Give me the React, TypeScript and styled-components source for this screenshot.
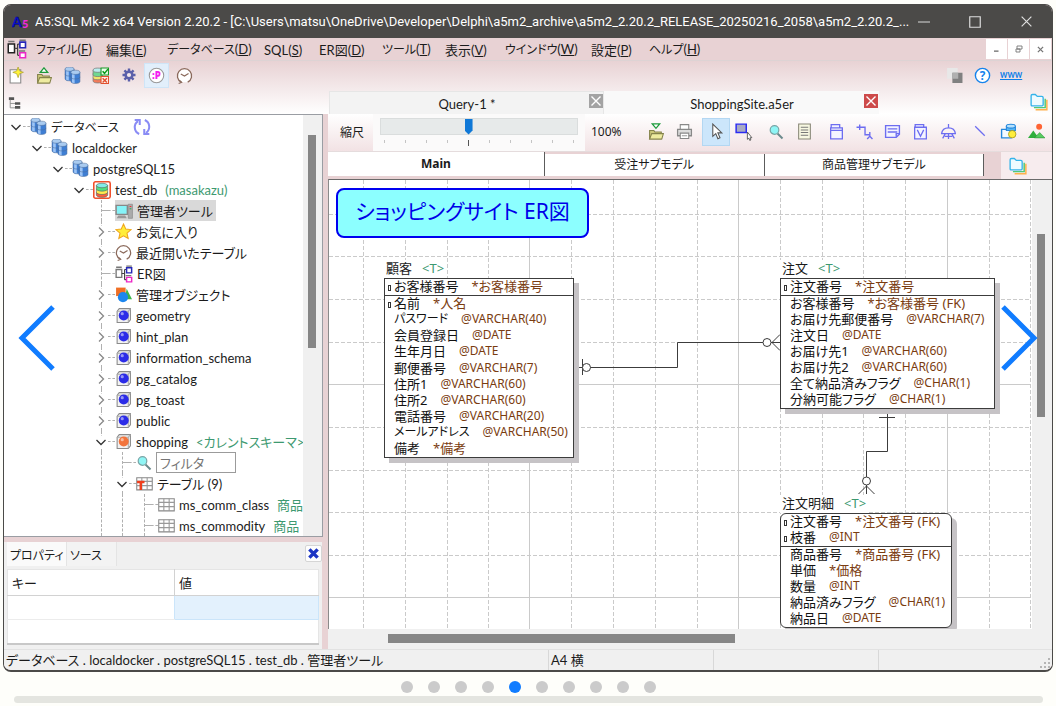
import React from "react";
import styled, { createGlobalStyle, css } from "styled-components";

const ui = `Lato, "Noto Sans CJK JP", sans-serif`;
const diagramFont = `"Noto Sans", "Noto Sans CJK JP", sans-serif`;
const pink = "#e8d2d4";

const Global = createGlobalStyle`
  *, *::before, *::after { box-sizing: border-box; }
  body { margin: 0; background: #fefefa; font-family: ${ui}; font-size: 13px; color: #1b1b1b; font-feature-settings: "palt"; }
  button { font: inherit; color: inherit; padding: 0; border: 0; background: none; }
  svg { display: block; flex: none; }
`;

/* ---------- frame ---------- */
const Page = styled.main`
  position: relative; height: 100vh; min-height: 500px; padding: 4px 3px 3px;
  display: flex; flex-direction: column; overflow: hidden;
`;
const Frame = styled.section`
  flex: 1; min-height: 0; display: flex; flex-direction: column;
  border: 1px solid #4b4a48; border-bottom-width: 2px; border-radius: 8px; overflow: hidden; background: ${pink};
`;
const TitleBar = styled.header`
  height: 33px; flex: none; display: flex; align-items: center; gap: 5px; padding-left: 8px;
  background: #4b4a48; color: #fff;
`;
const TitleText = styled.h1`
  margin: 0; font-family: Roboto, sans-serif; font-size: 13px; font-weight: 400; flex: 1; white-space: nowrap; overflow: hidden; text-overflow: ellipsis;
`;
const Caption = styled.div` display: flex; gap: 23px; padding-right: 12px; margin-left: -5px; `;
const CaptionButton = styled.button` width: 28px; height: 33px; display: grid; place-items: center; `;
const MenuBar = styled.nav`
  height: 22px; flex: none; display: flex; align-items: center; background: ${pink};
`;
const MenuIcon = styled.span` width: 32px; display: grid; place-items: start; padding-left: 3px; `;
const MenuList = styled.div`
  flex: 1; display: grid; white-space: nowrap;
  grid-template-columns: 70px 61px 97px 55px 63px 63px 60px 86px 58px auto;
`;
const MenuItem = styled.button` text-align: left; line-height: 22px; padding-top: 1px; `;
const Kana = styled.span<{ $small: boolean }>` font-size: ${(p) => (p.$small ? 12 : 13)}px; `;
const MdiButton = styled.button`
  width: 21px; height: 20px; margin-right: 1px; background: #fff; display: grid; place-items: center;
`;
const ToolArea = styled.div`
  flex: none; height: 54px; display: flex; flex-direction: column;
  background: linear-gradient(${pink}, #fff); border-top: 1px solid #ddd3d4;
`;
const Toolbar = styled.div` height: 30px; flex: none; display: flex; align-items: center; padding-bottom: 2px; `;
const Tool = styled.button<{ $on?: boolean }>`
  width: 25px; height: 25px; margin-right: 3px; display: grid; place-items: center; flex: none;
  ${(p) => p.$on && css`background: #e2effb; box-shadow: inset 0 0 0 1px #cfe5f7;`}
`;
const StackButton = styled.button` width: 26px; display: grid; place-items: center; padding-bottom: 2px; `;
const Spacer = styled.span` flex: 1; `;
const WebLink = styled.a` color: #0f7fe8; font-size: 7px; font-weight: 900; width: 20px; margin: 0 32px 0 2px; line-height: 9px; `;
const TabsRow = styled.div` flex: 1; display: flex; align-items: stretch; `;
const TreeHead = styled.div` width: 325px; flex: none; display: flex; align-items: center; padding-left: 4px; `;
const DocTab = styled.div<{ $on?: boolean }>`
  width: 275px; display: flex; align-items: flex-start; justify-content: flex-end; padding-top: 2px; gap: 1px;
  background: ${(p) => (p.$on ? "#f9f9f9" : "#f3f3f3")}; border: 1px solid ${(p) => (p.$on ? "#f9f9f9" : "#e6e6e6")};
`;
const DocName = styled.button` flex: 1; padding-left: 16px; line-height: 20px; `;
const Shut = styled.button<{ $red?: boolean }>`
  width: 14px; height: 14px; display: grid; place-items: center; background: ${(p) => (p.$red ? "#cd4a4a" : "#a3a3a3")};
`;

/* ---------- body ---------- */
const Body = styled.div` flex: 1; min-height: 0; display: flex; `;
const Side = styled.aside` width: 319px; margin-right: 5px; flex: none; display: flex; flex-direction: column; `;
const TreeBox = styled.div`
  flex: 1; min-height: 0; display: flex; background: #fff; border: 1px solid #9a9da3; border-left: 0; margin-bottom: 5px;
`;
const Tree = styled.div` flex: 1; min-width: 0; overflow: hidden; padding-top: 1px; `;
const Row = styled.div<{ $indent: number }>`
  position: relative; height: 21px; display: flex; align-items: center; white-space: nowrap; padding-left: ${(p) => p.$indent + 5}px;
`;
const Guide = styled.i<{ $x: number }>`
  position: absolute; left: ${(p) => p.$x}px; top: 0; bottom: 0; border-left: 1px dashed #b0b0b0;
`;
const Twist = styled.button`
  flex: none; width: 14px; height: 12px; display: grid; place-items: center; position: relative; background: #fff;
`;
const Leaf = styled.span` flex: none; width: 14px; padding-left: 8px; &::before { content: ""; display: block; border-top: 1px dashed #b0b0b0; } `;
const Stub = styled.span` flex: none; width: 7px; border-top: 1px dashed #b0b0b0; `;
const Item = styled.span<{ $on?: boolean }>`
  flex: none; height: 21px; display: flex; align-items: center; gap: 4px; padding-right: 3px;
  background: ${(p) => (p.$on ? "#d9d9d9" : "transparent")};
`;
const Note = styled.span` color: #3d9970; margin-left: 4px; `;
const FilterInput = styled.input`
  width: 80px; height: 21px; border: 1px solid #9b9b9b; background: #fff; padding: 0 3px; font: inherit;
  &::placeholder { color: #757575; }
`;
const TreeGutter = styled.div` flex: none; background: #f0f0f0; width: 19px; padding: 20px 0 0 5px; `;
const CanvasGutter = styled(TreeGutter)` width: 20px; padding-top: 54px; `;
const BottomGutter = styled.div` flex: none; background: #f0f0f0; height: 20px; padding: 5px 0 0 60px; `;
const Thumb = styled.div<{ $w: string; $h: string }>` width: ${(p) => p.$w}; height: ${(p) => p.$h}; background: #868686; `;
const Props = styled.section` height: 107px; flex: none; background: #f0f0f0; padding: 0 3px 4px; margin-right: 1px; `;
const PropTabs = styled.div` height: 27px; display: flex; margin-right: -3px; `;
const PropTab = styled.button<{ $on?: boolean }>`
  width: ${(p) => (p.$on ? 60 : 50)}px; height: 24px; text-align: left; padding-left: 3px; white-space: nowrap; font-size: 12px;
  background: ${(p) => (p.$on ? "#fafafa" : "#f3f3f3")}; border-right: 1px solid #e4e4e4; margin-bottom: 3px;
`;
const PropClose = styled.button`
  width: 17px; height: 17px; margin: 3px 0; background: #fdfdfd; border: 1px solid #d5d5d5; border-radius: 2px; display: grid; place-items: center;
`;
const PropTable = styled.table`
  width: 100%; height: 76px; background: #fff; border-collapse: collapse; table-layout: fixed;
  border: 1px solid #e5e5e5; border-bottom: 2px solid #c8c8c8;
  th { text-align: left; font-weight: 400; padding: 0 4px; height: 26px; border-bottom: 1px solid #d2d2d2; }
  th + th { border-left: 1px solid #d2d2d2; }
  td { height: 24px; padding: 0; border-bottom: 1px solid #ececec; }
  td + td { background: #e3f1fd; border: 1px solid #cbe5fa; }
  tr.rest td { background: #fff; border: 0; height: auto; }
  col:first-child { width: 167px; }
`;
const Main = styled.section` flex: 1; min-width: 0; display: flex; flex-direction: column; `;
const ErBar = styled.div`
  height: 38px; flex: none; display: flex; align-items: center; background: linear-gradient(#ffffff, #f2e2e4); border-bottom: 1px solid #e5dcdd;
`;
const ScaleLabel = styled.label` width: 45px; padding: 0 0 2px 12px; font-size: 12px; `;
const ScaleBox = styled.div`
  width: 212px; height: 37px; padding: 4px 7px 0; background: #fbfafa; display: flex; flex-direction: column; gap: 5px;
`;
const Scale = styled.input`
  appearance: none; margin: 0; width: 198px; height: 17px; background: #e7eaea; border: 1px solid #dadddd;
  &::-webkit-slider-thumb {
    appearance: none; width: 8px; height: 16px; background: #0f78d7; clip-path: polygon(0 0, 100% 0, 100% 75%, 50% 100%, 0 75%);
  }
`;
const Ticks = styled.div` display: flex; justify-content: space-between; padding: 0 4px; height: 6px; `;
const Tick = styled.i<{ $on?: boolean }>`
  width: 1px; height: ${(p) => (p.$on ? 6 : 3)}px; background: ${(p) => (p.$on ? "#555" : "#c4c4c4")};
`;
const ScaleValue = styled.output` width: 57px; padding: 0 0 2px 6px; font-family: ${diagramFont}; font-size: 12px; `;
const ErTools = styled.div` flex: 1; display: flex; align-items: center; padding-bottom: 2px; `;
const ErTool = styled.button<{ $on?: boolean; $group?: boolean }>`
  width: 28px; height: 28px; display: grid; place-items: center; margin-left: ${(p) => (p.$group ? 4 : 0)}px;
  ${(p) => p.$on && css`background: #cce6fb; border: 1px solid #b3d7f2;`}
`;
const ModelTabs = styled.div` height: 27px; flex: none; display: flex; background: ${pink}; font-family: ${diagramFont}; `;
const ModelTab = styled.button<{ $on?: boolean }>`
  flex: ${(p) => (p.$on ? 217 : 220)}; height: ${(p) => (p.$on ? 24 : 22)}px; margin-top: ${(p) => (p.$on ? 0 : 2)}px; background: #fff;
  border-right: 1px solid #5c5c5c; font-weight: ${(p) => (p.$on ? 700 : 400)}; font-size: 12px; line-height: 20px;
`;
const TabsEnd = styled.div`
  flex: 68; display: flex; align-items: center; justify-content: center; background: linear-gradient(90deg, ${pink} 17px, #f7ecee 17px);
`;
const CanvasRow = styled.div` flex: 1; min-height: 0; display: flex; border-top: 1px solid #6a6a6a; border-left: 1px solid #8a8a8a; `;
const Canvas = styled.div` position: relative; flex: 1; overflow: hidden; background: #fff; font-family: ${diagramFont}; `;
const Wires = styled.svg` position: absolute; inset: 0; `;
const Status = styled.footer`
  height: 21px; flex: none; background: #f0f0f0; border-top: 1px solid #e2e2e2; display: flex; line-height: 21px; white-space: nowrap;
`;
const Cell = styled.span<{ $w?: number }>`
  ${(p) => (p.$w ? `width: ${p.$w}px;` : "flex: 1;")} padding-left: 2px; border-right: 1px solid #d8d8d8;
  &:last-of-type { border: 0; }
`;
const Grip = styled.svg` align-self: flex-end; `;

/* ---------- diagram ---------- */
const Banner = styled.div`
  position: absolute; left: 7px; top: 8px; width: 253px; height: 50px; padding-bottom: 4px; display: grid; place-items: center;
  border: 2px solid #0000f0; border-radius: 8px; background: #8cffff; color: #0000e8; font-size: 21px; line-height: 42px; white-space: nowrap;
`;
const Node = styled.article<{ $x: number; $y: number; $w: number }>`
  position: absolute; left: ${(p) => p.$x}px; top: ${(p) => p.$y}px; width: ${(p) => p.$w}px; white-space: nowrap;
`;
const NodeTitle = styled.h2`
  margin: 0; display: flex; width: fit-content; gap: 10px; padding: 0 2px; height: 18px; line-height: 16px; background: #fff; font-size: 13px; font-weight: 400;
`;
const Tag = styled.span` color: #3d9970; `;
const NodeBox = styled.div<{ $h: number; $round?: boolean }>`
  height: ${(p) => p.$h}px; display: flex; flex-direction: column; background: #fff; border: 1px solid #3c3c3c;
  border-radius: ${(p) => (p.$round ? 6 : 0)}px; box-shadow: 5px 5px 0 #c6c3c6;
`;
const Field = styled.div<{ $last?: boolean }>`
  flex: 1; min-height: 0; padding-bottom: 2px; display: flex; align-items: center; font-size: 13px; line-height: 16px; color: #111;
  ${(p) => p.$last && css`border-bottom: 1px solid #3c3c3c;`}
`;
const Mark = styled.i<{ $on: boolean }>`
  width: 3px; height: 6px; margin: 3px 3px 0; border: 1px solid ${(p) => (p.$on ? "#333" : "transparent")};
`;
const Kind = styled.span<{ $type: boolean }>` color: #7a3c10; margin-left: 13px; font-size: ${(p) => (p.$type ? 12 : 13)}px; `;

/* ---------- carousel ---------- */
const Arrow = styled.button<{ $right?: boolean }>`
  position: absolute; top: 304px; ${(p) => (p.$right ? "right: 16px;" : "left: 16px;")}
`;
const Dots = styled.div` flex: none; height: 24px; display: flex; justify-content: center; align-items: center; gap: 15px; padding-top: 6px; `;
const Dot = styled.button<{ $on: boolean }>`
  width: 12px; height: 12px; border-radius: 50%; background: ${(p) => (p.$on ? "#107cff" : "#cbcbcb")};
`;
const Bar = styled.div` flex: none; height: 7px; margin: 0 10px 0 11px; border-radius: 4px; background: #e4e5e0; `;

/* ---------- icons ---------- */
const Svg = ({ s = 17, children }: { s?: number; children: React.ReactNode }) => (
  <svg width={s} height={s} viewBox="0 0 16 16" fill="none" aria-hidden="true">{children}</svg>
);
const Cyl = ({ x, y, w, h }: { x: number; y: number; w: number; h: number }) => (
  <g stroke="#4a6a98" strokeWidth=".5">
    <path d={`M${x} ${y + 2}v${h - 4}a${w / 2} 2 0 0 0 ${w} 0v-${h - 4}z`} fill="#3f7fd4" />
    <path d={`M${x + 1} ${y + 3}v${h - 4}l2.500 .8v-${h - 4}z`} fill="#9cc4f6" stroke="none" />
    <ellipse cx={x + w / 2} cy={y + 2} rx={w / 2} ry="2" fill="#a9cbf0" />
    <path d={`M${x} ${y + h / 2}a${w / 2} 2 0 0 0 ${w} 0`} />
  </g>
);
const Db = () => <Svg><Cyl x={1} y={0} w={8.5} h={13} /><Cyl x={6.5} y={3} w={8.5} h={12.5} /></Svg>;
const ColorDb = ({ boxed }: { boxed?: boolean }) => (
  <Svg s={18}>
    {boxed && <rect x=".7" y=".7" width="14.6" height="14.6" rx="1.5" stroke="#f0502c" strokeWidth="1.4" fill="#fff" />}
    <g stroke="#5d6b62" strokeWidth=".6">
      <path d="M3 10v2.5a5 2 0 0 0 10 0V10z" fill="#ff5b3e" />
      <path d="M3 7v3a5 2 0 0 0 10 0V7z" fill="#ffe94e" />
      <path d="M3 4v3a5 2 0 0 0 10 0V4z" fill="#52df80" />
      <ellipse cx="8" cy="4" rx="5" ry="2" fill="#82ece8" />
    </g>
  </Svg>
);
const DbCheck = () => (
  <Svg>
    <g stroke="#777" strokeWidth=".7">
      <path d="M1 10v3a4.5 2 0 0 0 9 0v-3z" fill="#f47b5a" /><path d="M1 6v4a4.5 2 0 0 0 9 0V6z" fill="#f2e66a" />
      <path d="M1 3v4a4.5 2 0 0 0 9 0V3z" fill="#6fd991" /><ellipse cx="5.5" cy="3" rx="4.5" ry="2" fill="#b8eeee" />
    </g>
    <path d="M8.500 1h7v6.500h-7z" fill="#eaffea" stroke="#169a26" /><path d="M10 4l1.800 2L15 2" stroke="#0b9a1c" strokeWidth="1.500" />
    <path d="M8.500 9h7v6.500h-7z" fill="#fff0ea" stroke="#e2502e" /><path d="M10 10.500l4 4m0-4l-4 4" stroke="#e2502e" strokeWidth="1.300" />
  </Svg>
);
const NewFile = () => (
  <Svg><path d="M2 2.500h10v12.500H2z" fill="#fff" stroke="#888" /><path d="M9.500 0l1.300 3.700L14.500 5l-3.700 1.300L9.500 10 8.200 6.300 4.500 5l3.700-1.300z" fill="#fff23a" stroke="#a69a20" strokeWidth=".6" /></Svg>
);
const Folder = ({ down }: { down?: boolean }) => (
  <Svg>
    <path d={down ? "M4 .8h7L7.500 5z" : "M4 5h7L7.500 .8z"} fill="#fff" stroke="#1e9b3c" strokeWidth="1.200" />
    <path d="M1.500 15V7h4l1 1.500h6V15z" fill="#cbc77a" stroke="#85834c" /><path d="M1.500 15l2-5h11L13 15z" fill="#eeeba0" stroke="#85834c" />
  </Svg>
);
const Gear = () => (
  <Svg s={16}>
    <g stroke="#5b60aa" strokeWidth="2.400"><path d="M8 1.500v13M1.500 8h13M3.400 3.400l9.200 9.200M12.600 3.400l-9.200 9.200" /></g>
    <circle cx="8" cy="8" r="4.600" fill="#5b60aa" /><circle cx="8" cy="8" r="2.100" fill="#f3e8ea" />
  </Svg>
);
const Face = () => (
  <Svg><circle cx="8" cy="8" r="6.800" fill="#fff" stroke="#999" /><text x="8" y="11.300" textAnchor="middle" fontSize="9" fontWeight="900" fill="#f41ef0" fontFamily="Noto Sans">:P</text></Svg>
);
const Clock = () => (
  <Svg><path d="M5 14.300A6.700 6.700 0 1 1 11 14.300" fill="#fff" stroke="#8b6a5c" strokeWidth="1.200" /><path d="M3 12.500l2.300 2-2.800 1M4.500 6.500l3.500 2 3.800-2.300" stroke="#8b6a5c" strokeWidth="1.100" /></Svg>
);
const TreeIcon = () => (
  <Svg s={14}><path d="M1 1.500h6v3H1zM8 7h6v3H8zM8 11.500h6v3H8z" fill="#555" /><path d="M2.500 4v9.500H8M2.500 8.500H8" stroke="#888" /></Svg>
);
const ErIcon = ({ s = 20, frame = "#222" }: { s?: number; frame?: string }) => (
  <Svg s={s}>
    <path d="M1 2h5M10 1h5M9.500 9.500h5" stroke="#777" strokeWidth="1.200" /><path d="M1 4h5v7H1z" fill="#fff" stroke={frame} strokeWidth="1.200" />
    <path d="M6 7.500h2.500M8.500 4v9M8.500 4H10M8.500 13H10" stroke="#444" />
    <path d="M10.300 2.500h4.500v4.500h-4.500z" fill="#fff" stroke="#2527b8" strokeWidth="1.300" /><path d="M10.300 11h4.500v4h-4.500z" fill="#fff" stroke="#ec28c6" strokeWidth="1.300" />
  </Svg>
);
const Pc = () => (
  <Svg s={18}><path d="M1 3h10v8H1z" fill="#86f3f8" stroke="#888" strokeWidth="1.300" /><path d="M3 12h6l1.500 2.500h-9z" fill="#999" /><path d="M11.800 2h3.700v12.500h-3.700z" fill="#aaa" stroke="#888" strokeWidth=".6" /><path d="M13 4h1.500" stroke="#e33" /><path d="M13 6h1.500" stroke="#2a5" /></Svg>
);
const Star = () => <Svg><path d="M8 1l2.100 4.700 5 .5-3.800 3.400 1.100 5L8 12.100 3.600 14.600l1.100-5L.9 6.200l5-.5z" fill="#ffee3a" stroke="#efa51e" /></Svg>;
const Shapes = () => <Svg><path d="M1 1.500h9v8H1z" fill="#f06f24" /><path d="M11 2.500l5 10h-7z" fill="#3cb54a" /><circle cx="7.500" cy="10.500" r="4.800" fill="#1c86ee" /></Svg>;
const Schema = ({ c }: { c: string }) => (
  <Svg s={17}><path d="M2 4l2-2.500h10.500V12l-2 2.500H2z" fill="#f2f2f2" stroke="#8a8a8a" /><path d="M2 4h10.500v10.500M12.500 4l2-2.500" stroke="#aaa" /><circle cx="8.200" cy="8" r="4.700" fill={c} /><circle cx="6.800" cy="6.300" r="1.500" fill="#fff" opacity=".5" /></Svg>
);
const Lens = ({ s = 16 }: { s?: number }) => <Svg s={s}><path d="M9.500 9.500l5 5" stroke="#6b8a8c" strokeWidth="2" /><circle cx="6.500" cy="6" r="4.300" fill="#8ff5f5" stroke="#78a5a6" strokeWidth="1.200" /></Svg>;
const Grid = ({ t }: { t?: boolean }) => (
  <Svg s={17}><path d="M.7 2.500h14.600v11.500H.7z" fill="#fff" stroke="#888" /><path d="M.7 6h14.600M.7 10h14.600M5.500 2.500V14M10.500 2.500V14" stroke="#999" />{t && <path d="M1 6.500h7M4.500 6.500V14" stroke="#ef3f1d" strokeWidth="2.300" />}</Svg>
);
const Refresh = () => <Svg s={18}><g stroke="#8a8cf5" strokeWidth="1.800"><path d="M5.500 14.200A6.500 6.500 0 0 1 4.500 2.800M10.500 1.800a6.500 6.500 0 0 1 1 11.400" /><path d="M1.500 1.800H6v4.500M14.500 14.200H10V9.700" /></g></Svg>;
const Chevron = ({ open }: { open: boolean }) => (
  <svg width="12" height="12" viewBox="0 0 12 12" fill="none" aria-hidden="true"><path d={open ? "M1.500 4L6 8.500 10.500 4" : "M4 1.500L8.500 6 4 10.500"} stroke={open ? "#333" : "#888"} strokeWidth="1.300" /></svg>
);
const X = ({ c = "#fff", w = 1.8, s = 12 }: { c?: string; w?: number; s?: number }) => <Svg s={s}><path d="M2 2l12 12M14 2L2 14" stroke={c} strokeWidth={w} /></Svg>;
const Stack = () => (
  <Svg s={18}><path d="M5 14.800h10V6" stroke="#ffb04a" strokeWidth="1.300" /><path d="M3.500 13h10V5" stroke="#50c878" strokeWidth="1.300" /><path d="M1 10.500V2.500q0-1.200 1.200-1.200h2.500L6.500 3h4q1.200 0 1.200 1.200v6.300q0 1-1 1H2q-1 0-1-1z" fill="#effbff" stroke="#35b4ea" strokeWidth="1.200" /></Svg>
);
const Printer = () => <Svg><path d="M4 1.500h8v5H4z" fill="#fff" stroke="#888" /><path d="M1.500 6h13v6h-13z" fill="#ddd" stroke="#888" strokeWidth="1.200" /><path d="M4 9.500h8v5H4z" fill="#fff" stroke="#888" /><path d="M5.500 12h5" stroke="#999" /></Svg>;
const Pointer = () => <Svg><path d="M4.500 1v11.500l2.800-2.500 2 4.800 2-1-2-4.500h3.700z" fill="#fff" stroke="#555" /></Svg>;
const Marquee = () => <Svg s={18}><path d="M1 1h9v7.500H1z" fill="#a9abc3" stroke="#2a2af2" strokeWidth="1.300" /><path d="M11 8v6.500l1.300-1 .8 2 1-.4-.7-2h1.600z" fill="#fff" stroke="#555" strokeWidth=".8" /></Svg>;
const Doc = () => <Svg><path d="M2.500 1h11v14h-11z" fill="#f8f8e2" stroke="#888777" /><path d="M4.500 4h7M4.500 6.500h7M4.500 9h7M4.500 11.500h7" stroke="#777" /></Svg>;
const P = "#6d6df0";
const EntityIcon = () => <Svg><path d="M2.500 4.500h11V15h-11zM2.500 7h11M3 4V1.500h8V4" fill="#f4f4ff" stroke={P} strokeWidth="1.200" /></Svg>;
const Relation = () => <Svg><path d="M.5 4h8v7H13M3.500 1.500v5M13 8.500v4L10.500 15M13 12.500l2.500 2.500" stroke={P} strokeWidth="1.300" /></Svg>;
const Memo = () => <Svg><path d="M1.500 2.500h13v8l-3 3h-10z" fill="#f4f4ff" stroke={P} strokeWidth="1.300" /><path d="M3.500 5.500h9M3.500 8.500h9M11.500 13v-3h3" stroke={P} strokeWidth="1.300" /></Svg>;
const ViewIcon = () => <Svg><path d="M2.500 4h11v11h-11zM3 4V1.500h8V4" fill="#f4f4ff" stroke={P} strokeWidth="1.200" /><path d="M5 6.500l3 6 3-6" stroke={P} strokeWidth="1.200" /></Svg>;
const Lamp = () => <Svg><path d="M8 1v3M1.500 10C2 6 4.500 4.500 8 4.500S14 6 14.500 10zM5 10l-2.500 4.500M11 10l2.500 4.500M8 10v5M4.500 12.500h7" stroke={P} strokeWidth="1.200" /></Svg>;
const Line = () => <Svg><path d="M3 3l9 9" stroke={P} strokeWidth="1.200" /></Svg>;
const Blocks = () => <Svg><path d="M1.500 6h9v8h-9z" fill="#f4faff" stroke="#2587dc" strokeWidth="1.300" /><path d="M6 3v4h8.500V3" fill="#58b6f3" stroke="#2587dc" /><ellipse cx="10.200" cy="3" rx="4.300" ry="1.800" fill="#b5e0fc" stroke="#2587dc" /><circle cx="11.500" cy="10.500" r="3.500" fill="#ffee3d" stroke="#a79a20" strokeWidth=".8" /></Svg>;
const Photo = () => <Svg><circle cx="10.500" cy="3.500" r="2.800" fill="#ff6333" /><path d="M0 14l5-7 5 7z" fill="#2fae3c" /><path d="M6 14l5-5 5 5z" fill="#57cb60" stroke="#1f8e2c" strokeWidth=".5" /></Svg>;
const Logo = () => (
  <svg width="18" height="20" viewBox="0 0 18 20" aria-hidden="true">
    <text x="0" y="15" fontSize="14" fontWeight="900" fill="#0910d8" stroke="#02056e" strokeWidth=".5" fontFamily="Lato">A</text>
    <text x="10" y="16" fontSize="11" fontWeight="900" fill="#f02adf" fontFamily="Lato">5</text>
  </svg>
);

/* ---------- data ---------- */
const menus: [string, string][] = [
  ["ファイル", "F"], ["編集", "E"], ["データベース", "D"], ["SQL", "S"], ["ER図", "D"],
  ["ツール", "T"], ["表示", "V"], ["ウインドウ", "W"], ["設定", "P"], ["ヘルプ", "H"],
];
const isKana = (s: string) => /^[<>ァ-ヶー]+$/.test(s);

const indents = [0, 21, 42, 63, 85, 106, 128];
type TreeNode = { level: number; label?: string; icon: React.ReactNode; open?: boolean; note?: string; guides?: number[]; selected?: boolean; extra?: React.ReactNode };
const blue = <Schema c="#2c2ce8" />;
const tree: TreeNode[] = [
  { level: 0, label: "データベース", icon: <Db />, open: true, extra: <Refresh /> },
  { level: 1, label: "localdocker", icon: <Db />, open: true },
  { level: 2, label: "postgreSQL15", icon: <Db />, open: true },
  { level: 3, label: "test_db", icon: <ColorDb boxed />, open: true, note: "(masakazu)" },
  { level: 4, label: "管理者ツール", icon: <Pc />, guides: [97], selected: true },
  { level: 4, label: "お気に入り", icon: <Star />, open: false, guides: [97] },
  { level: 4, label: "最近開いたテーブル", icon: <Clock />, open: false, guides: [97] },
  { level: 4, label: "ER図", icon: <ErIcon s={18} frame="#777" />, guides: [97] },
  { level: 4, label: "管理オブジェクト", icon: <Shapes />, open: false, guides: [97] },
  ...["geometry", "hint_plan", "information_schema", "pg_catalog", "pg_toast", "public"].map((label) => ({ level: 4, label, icon: blue, open: false, guides: [97] })),
  { level: 4, label: "shopping", icon: <Schema c="#f2743c" />, open: true, note: "<カレントスキーマ>", guides: [97] },
  { level: 5, icon: <Lens />, guides: [97, 118], extra: <FilterInput aria-label="フィルタ" placeholder="フィルタ" /> },
  { level: 5, label: "テーブル (9)", icon: <Grid t />, open: true, guides: [97, 118] },
  { level: 6, label: "ms_comm_class", icon: <Grid />, note: "商品", guides: [97, 118, 140] },
  { level: 6, label: "ms_commodity", icon: <Grid />, note: "商品", guides: [97, 118, 140] },
];

type Entity = { name: string; x: number; y: number; w: number; h: number; round?: boolean; keys: number; marks: number; fields: [string, string][] };
const entities: Entity[] = [
  { name: "顧客", x: 55, y: 80, w: 190, h: 180, keys: 1, marks: 2, fields: [
    ["お客様番号", "*お客様番号"], ["名前", "*人名"], ["パスワード", "@VARCHAR(40)"], ["会員登録日", "@DATE"], ["生年月日", "@DATE"],
    ["郵便番号", "@VARCHAR(7)"], ["住所1", "@VARCHAR(60)"], ["住所2", "@VARCHAR(60)"], ["電話番号", "@VARCHAR(20)"],
    ["メールアドレス", "@VARCHAR(50)"], ["備考", "*備考"]] },
  { name: "注文", x: 451, y: 80, w: 215, h: 131, keys: 1, marks: 1, fields: [
    ["注文番号", "*注文番号"], ["お客様番号", "*お客様番号 (FK)"], ["お届け先郵便番号", "@VARCHAR(7)"], ["注文日", "@DATE"],
    ["お届け先1", "@VARCHAR(60)"], ["お届け先2", "@VARCHAR(60)"], ["全て納品済みフラグ", "@CHAR(1)"], ["分納可能フラグ", "@CHAR(1)"]] },
  { name: "注文明細", x: 451, y: 315, w: 172, h: 115, round: true, keys: 2, marks: 2, fields: [
    ["注文番号", "*注文番号 (FK)"], ["枝番", "@INT"], ["商品番号", "*商品番号 (FK)"], ["単価", "*価格"], ["数量", "@INT"],
    ["納品済みフラグ", "@CHAR(1)"], ["納品日", "@DATE"]] },
];
const vLines = [34, 76, 118, 159, 200, 242, 284, 326, 368, 409, 451, 493, 534, 576, 618, 660, 701];
const hLines = [34, 76, 119, 162, 204, 247, 290, 332, 375, 417];

const erTools: [string, React.ReactNode][] = [
  ["保存", <Folder down />], ["印刷", <Printer />], ["選択", <Pointer />], ["範囲選択", <Marquee />], ["検索", <Lens />], ["一覧", <Doc />],
  ["エンティティ", <EntityIcon />], ["リレーション", <Relation />], ["コメント", <Memo />], ["ビュー", <ViewIcon />], ["マーク", <Lamp />],
  ["直線", <Line />], ["図形", <Blocks />], ["画像", <Photo />],
];
const groupStarts = [2, 4, 6, 11];

function DiagramLines() {
  return (
    <Wires width="100%" height="100%" fill="none" aria-hidden="true">
      <g stroke="#cacaca" shapeRendering="crispEdges">
        {vLines.map((x, i) => <path key={x} d={`M${x + 0.5} 0V900`} strokeDasharray={i % 5 === 4 ? undefined : "4 2"} />)}
        {hLines.map((y, i) => <path key={y} d={`M0 ${y + 0.5}H702`} strokeDasharray={i % 5 === 4 ? undefined : "4 2"} />)}
      </g>
      <g stroke="#3c3c3c">
        <path d="M245 187.500h103.500v-25H451M253.500 179v16M443 162.500l8-8M443 162.500l8 8" />
        <circle cx="257.500" cy="187.500" r="4" fill="#fff" /><circle cx="438" cy="162.500" r="4" fill="#fff" />
        <path d="M558.500 211v60.500h-21v42.500M550 237.500h16M537.500 306l-8 8M537.500 306l8 8M532 446l3 3M544 446l-3 3" />
        <circle cx="537.500" cy="301" r="4" fill="#fff" />
      </g>
    </Wires>
  );
}

export default function App() {
  return (
    <Page lang="ja">
      <Global />
      <Frame>
        <TitleBar>
          <Logo />
          <TitleText>A5:SQL Mk-2 x64 Version 2.20.2 - [C:\Users\matsu\OneDrive\Developer\Delphi\a5m2_archive\a5m2_2.20.2_RELEASE_20250216_2058\a5m2_2.20.2_...</TitleText>
          <Caption>
            <CaptionButton aria-label="最小化"><Svg s={12}><path d="M0 8h16" stroke="#ddd" strokeWidth="1.300" /></Svg></CaptionButton>
            <CaptionButton aria-label="最大化"><Svg s={12}><path d="M1 1h14v14H1z" stroke="#ddd" strokeWidth="1.600" /></Svg></CaptionButton>
            <CaptionButton aria-label="閉じる"><X c="#ddd" w={1.5} s={13} /></CaptionButton>
          </Caption>
        </TitleBar>
        <MenuBar>
          <MenuIcon><ErIcon /></MenuIcon>
          <MenuList>{menus.map(([t, k]) => <MenuItem key={t}><Kana $small={isKana(t)}>{t}</Kana>(<u>{k}</u>)</MenuItem>)}</MenuList>
          <MdiButton aria-label="最小化"><Svg s={8}><path d="M2 12h9" stroke="#666" strokeWidth="2.500" /></Svg></MdiButton>
          <MdiButton aria-label="元に戻す"><Svg s={8}><path d="M4 2h10v6H4zM2 8h8v6H2z" fill="#fff" stroke="#777" strokeWidth="1.800" /></Svg></MdiButton>
          <MdiButton aria-label="閉じる"><X c="#777" w={3} s={7} /></MdiButton>
        </MenuBar>
        <ToolArea>
          <Toolbar>
            <Tool aria-label="新規"><NewFile /></Tool>
            <Tool aria-label="開く"><Folder /></Tool>
            <Tool aria-label="データベース"><Db /></Tool>
            <Tool aria-label="接続"><DbCheck /></Tool>
            <Tool aria-label="設定"><Gear /></Tool>
            <Tool aria-label="パラメータ" $on><Face /></Tool>
            <Tool aria-label="履歴"><Clock /></Tool>
            <Spacer />
            <Tool aria-label="ウインドウ"><Svg><path d="M1 1h10v10H1z" fill="#e8e8e8" /><path d="M6 5.500h9.500V15H6z" fill="#808080" /><path d="M6 5.500h5.500V11H6z" fill="#b0b0b0" /></Svg></Tool>
            <Tool aria-label="ヘルプ"><Svg><circle cx="8" cy="8" r="6.700" fill="#fff" stroke="#1583ec" strokeWidth="1.300" /><text x="8" y="12" textAnchor="middle" fontSize="11" fontWeight="700" fill="#1583ec" fontFamily="Noto Sans">?</text></Svg></Tool>
            <WebLink href="#web">WWW</WebLink>
          </Toolbar>
          <TabsRow>
            <TreeHead><TreeIcon /></TreeHead>
            <DocTab><DocName>Query-1 *</DocName><Shut aria-label="Query-1 を閉じる"><X /></Shut></DocTab>
            <DocTab $on><DocName>ShoppingSite.a5er</DocName><Shut $red aria-label="ShoppingSite を閉じる"><X /></Shut></DocTab>
            <Spacer />
            <StackButton aria-label="タブ一覧"><Stack /></StackButton>
          </TabsRow>
        </ToolArea>
        <Body>
          <Side>
            <TreeBox>
              <Tree>
                {tree.map((n, i) => (
                  <Row key={i} $indent={indents[n.level]}>
                    {n.guides?.map((x) => <Guide key={x} $x={x} />)}
                    {n.open === undefined ? <Leaf /> : <Twist aria-label={n.open ? "閉じる" : "開く"}><Chevron open={n.open} /></Twist>}
                    <Stub />
                    <Item $on={n.selected}>
                      {n.icon}
                      {n.label && <Kana $small={isKana(n.label)}>{n.label}</Kana>}
                      {n.note && <Note>{n.note}</Note>}
                      {n.level === 0 && <span>&nbsp;&nbsp;</span>}
                      {n.extra}
                    </Item>
                  </Row>
                ))}
              </Tree>
              <TreeGutter><Thumb $w="8px" $h="213px" /></TreeGutter>
            </TreeBox>
            <Props>
              <PropTabs>
                <PropTab $on>プロパティ</PropTab><PropTab>ソース</PropTab><Spacer />
                <PropClose aria-label="閉じる"><X c="#1c35c4" w={5} s={11} /></PropClose>
              </PropTabs>
              <PropTable>
                <colgroup><col /><col /></colgroup>
                <thead><tr><th>キー</th><th>値</th></tr></thead>
                <tbody><tr><td /><td /></tr><tr className="rest"><td /><td /></tr></tbody>
              </PropTable>
            </Props>
          </Side>
          <Main>
            <ErBar>
              <ScaleLabel htmlFor="scale">縮尺</ScaleLabel>
              <ScaleBox>
                <Scale id="scale" type="range" min={0} max={9} step={0.1} defaultValue={4} />
                <Ticks>{Array.from({ length: 10 }, (_, i) => <Tick key={i} $on={i === 4} />)}</Ticks>
              </ScaleBox>
              <ScaleValue htmlFor="scale">100%</ScaleValue>
              <ErTools>{erTools.map(([t, icon], i) => <ErTool key={t} aria-label={t} $on={i === 2} $group={groupStarts.includes(i)}>{icon}</ErTool>)}</ErTools>
            </ErBar>
            <ModelTabs>
              <ModelTab $on>Main</ModelTab><ModelTab>受注サブモデル</ModelTab><ModelTab>商品管理サブモデル</ModelTab>
              <TabsEnd><Stack /></TabsEnd>
            </ModelTabs>
            <CanvasRow>
              <Canvas>
                <DiagramLines />
                <Banner>ショッピングサイト ER図</Banner>
                {entities.map((e) => (
                  <Node key={e.name} $x={e.x} $y={e.y} $w={e.w}>
                    <NodeTitle>{e.name}<Tag>&lt;T&gt;</Tag></NodeTitle>
                    <NodeBox $h={e.h} $round={e.round}>
                      {e.fields.map(([n, k], i) => (
                        <Field key={n} $last={i === e.keys - 1}><Mark $on={i < e.marks} /><Kana $small={isKana(n)}>{n}</Kana><Kind $type={k.startsWith("@")}>{k}</Kind></Field>
                      ))}
                    </NodeBox>
                  </Node>
                ))}
              </Canvas>
              <CanvasGutter><Thumb $w="8px" $h="183px" /></CanvasGutter>
            </CanvasRow>
            <BottomGutter><Thumb $w="347px" $h="9px" /></BottomGutter>
          </Main>
        </Body>
        <Status>
          <Cell $w={545}>データベース . localdocker . postgreSQL15 . test_db . 管理者ツール</Cell>
          <Cell $w={165}>A4 横</Cell><Cell $w={165} /><Cell />
          <Grip width="12" height="12" aria-hidden="true"><g fill="#b5b5b5"><path d="M8 0h2v2H8zM4 4h2v2H4zM8 4h2v2H8zM0 8h2v2H0zM4 8h2v2H4zM8 8h2v2H8z" /></g></Grip>
        </Status>
      </Frame>
      <Dots>{Array.from({ length: 10 }, (_, i) => <Dot key={i} $on={i === 4} aria-label={`${i + 1}枚目`} />)}</Dots>
      <Bar />
      <Arrow aria-label="前へ"><svg width="40" height="68" fill="none"><path d="M37 3L6 34l31 31" stroke="#107cff" strokeWidth="5" /></svg></Arrow>
      <Arrow $right aria-label="次へ"><svg width="40" height="68" fill="none"><path d="M3 3l31 31L3 65" stroke="#107cff" strokeWidth="5" /></svg></Arrow>
    </Page>
  );
}
